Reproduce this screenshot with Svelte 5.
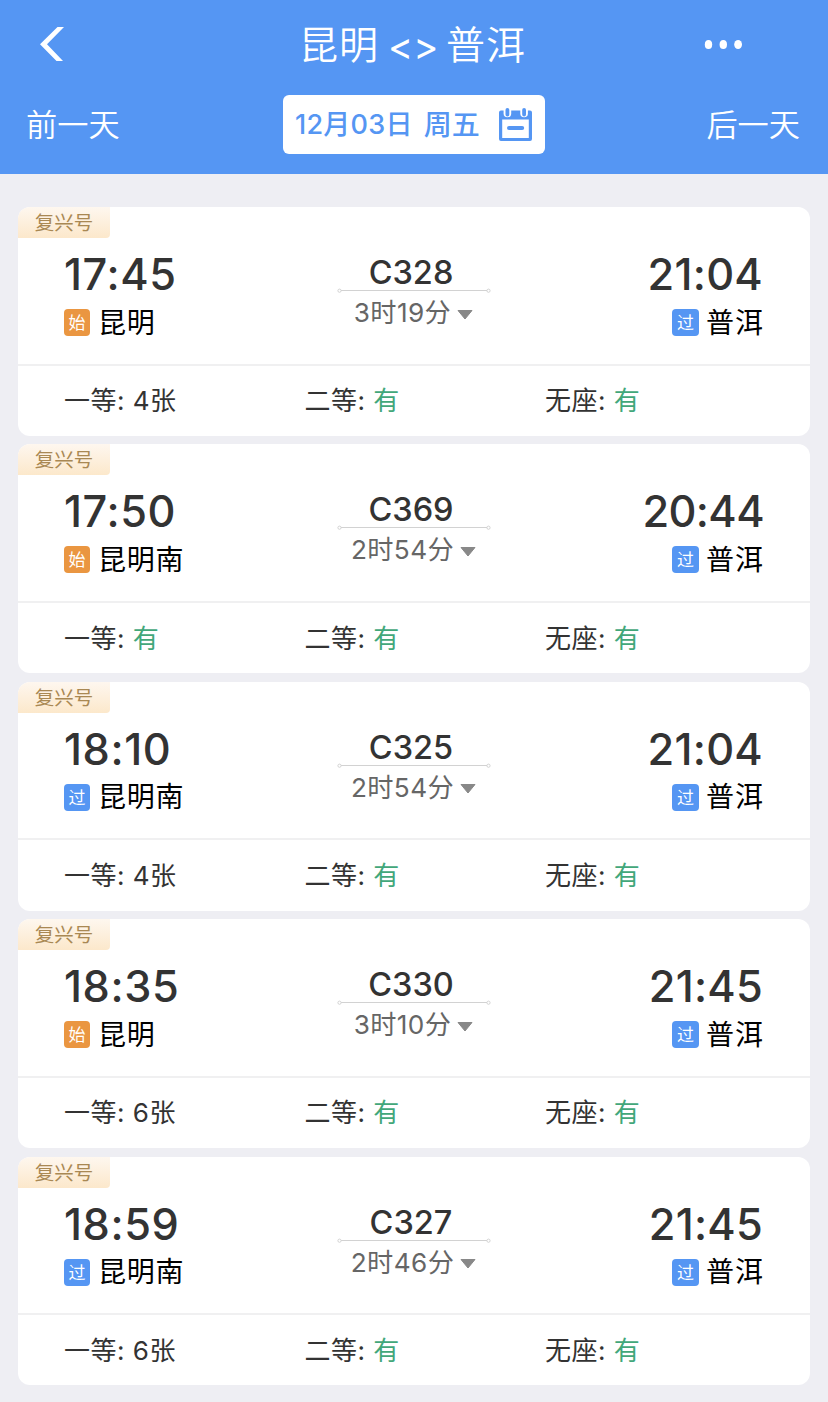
<script>
  const trains = [
    { no: 'C328', dep: '17:45', arr: '21:04', from: '昆明', origin: true, time: '3时19分', first: '4张' },
    { no: 'C369', dep: '17:50', arr: '20:44', from: '昆明南', origin: true, time: '2时54分', first: '有' },
    { no: 'C325', dep: '18:10', arr: '21:04', from: '昆明南', origin: false, time: '2时54分', first: '4张' },
    { no: 'C330', dep: '18:35', arr: '21:45', from: '昆明', origin: true, time: '3时10分', first: '6张' },
    { no: 'C327', dep: '18:59', arr: '21:45', from: '昆明南', origin: false, time: '2时46分', first: '6张' }
  ];
  const seats = (t) => [['一等', t.first], ['二等', '有'], ['无座', '有']];
</script>

<div class="page">
  <header>
    <div class="bar">
      <svg class="back" width="26" height="36" viewBox="0 0 26 36"><path d="M18.5 1H25L8 18.3L24 35H17.5L1 18.3Z" fill="#fff" /></svg>
      <h1><span>昆明</span><span class="swap">&lt;&gt;</span><span>普洱</span></h1>
      <svg class="more" width="40" height="10" viewBox="0 0 40 10" fill="#fff">
        <ellipse cx="5.500" cy="4.500" rx="3.700" ry="4.500" /><ellipse cx="20.300" cy="4.500" rx="3.700" ry="4.500" /><ellipse cx="35.100" cy="4.500" rx="3.900" ry="4.500" />
      </svg>
    </div>
    <div class="days">
      <span>前一天</span>
      <div class="date">
        <span class="day">12月03日</span><span class="week">周五</span>
        <svg width="34" height="34" viewBox="0 0 34 34">
          <path fill-rule="evenodd" d="M2 2.600H31Q33 2.600 33 4.600V31Q33 33 31 33H2Q0 33 0 31V4.600Q0 2.600 2 2.600ZM3.200 11.500V30H29.800V11.500Z" fill="#5596f3" />
          <rect x="4.600" y="-2" width="7.600" height="11.200" rx="3.800" fill="#fff" />
          <rect x="21.300" y="-2" width="7.600" height="11.200" rx="3.800" fill="#fff" />
          <path d="M8.400 2v4.500M25.100 2v4.500" stroke="#5596f3" stroke-width="3.800" stroke-linecap="round" />
          <path d="M10 20h13.200" stroke="#5596f3" stroke-width="4" stroke-linecap="round" />
        </svg>
      </div>
      <span>后一天</span>
    </div>
  </header>

  <main>
    {#each trains as t}
      <article>
        <div class="tag">复兴号</div>
        <div class="trip">
          <div class="end">
            <div class="clock">{t.dep}</div>
            <div class="station"><i class:origin={t.origin}>{t.origin ? '始' : '过'}</i><span>{t.from}</span></div>
          </div>
          <div class="mid">
            <div class="no">{t.no}</div>
            <svg class="line" width="154" height="6" viewBox="0 0 154 6" fill="#fff" stroke="#d2d2d2">
              <path d="M4 2.500H150" /><circle cx="2.500" cy="2.700" r="1.600" /><circle cx="151.500" cy="2.700" r="1.600" />
            </svg>
            <div class="dur">{t.time}<svg width="16" height="10" viewBox="0 0 16 10"><path d="M1 .5H15L8 9Z" fill="#888" stroke="#888" stroke-linejoin="round" /></svg></div>
          </div>
          <div class="end right">
            <div class="clock" class:wide={!t.arr.includes('1')}>{t.arr}</div>
            <div class="station"><i>过</i><span>普洱</span></div>
          </div>
        </div>
        <div class="seats">
          {#each seats(t) as [name, left]}
            <div>{name}: <span class:ok={left === '有'}>{left}</span></div>
          {/each}
        </div>
      </article>
    {/each}
  </main>
</div>

<style>
  :global(body) { background: #eeeef3; }
  .page { width: 828px; height: 1402px; overflow: hidden; background: #eeeef3; font-family: Inter, "Noto Sans CJK SC", sans-serif; color: #333; }
  header { height: 174px; background: #5596f3; color: #fff; box-sizing: border-box; }
  .bar { height: 95px; box-sizing: border-box; padding: 0 85px 6px 39px; display: grid; grid-template-columns: 138px 1fr 184px; align-items: center; }
  .back { position: relative; top: -.5px; }
  .more { justify-self: end; }
  h1 { margin: 0; padding-left: 122px; display: flex; align-items: center; font-size: 39px; line-height: 50px; font-weight: 350; white-space: nowrap; letter-spacing: 1px; }
  .swap { width: 50px; margin: 3px 8px 0 9px; font-size: 38px; font-weight: 400; letter-spacing: 0; line-height: 45px; text-align: center; }
  .days { height: 59px; padding: 0 28px 0 26px; display: grid; grid-template-columns: 257px 262px 1fr; align-items: center; font-size: 31.200px; font-weight: 350; line-height: 58px; }
  .days > span:last-child { text-align: right; }
  .date { height: 59px; box-sizing: border-box; padding: 0 12px; border-radius: 6px; background: #fff; color: #5596f3; display: flex; align-items: center; font-size: 27px; font-weight: 500; white-space: nowrap; }
  .day { letter-spacing: .25px; }
  .week { margin-left: 11px; font-size: 28px; }
  .date svg { margin: 1px 0 0 auto; }
  main { padding: 33px 18px 0; display: flex; flex-direction: column; gap: 8.650px; }
  article { height: 228.750px; background: #fff; border-radius: 12px; overflow: hidden; display: flex; flex-direction: column; }
  .tag { width: 92px; height: 31px; border-radius: 0 0 4px 0; background: linear-gradient(#fef7ef, #fce8cb); color: #a98853; font-size: 19.500px; line-height: 32.500px; text-align: center; }
  .trip { height: 127.500px; box-sizing: border-box; padding: 0 46px; display: grid; grid-template-columns: 1fr 154px 1fr; border-bottom: 2px solid #f0f0f1; }
  .end { display: flex; flex-direction: column; align-items: flex-start; padding-top: 10px; }
  .right { align-items: flex-end; }
  .clock { font-size: 43.300px; font-weight: 470; line-height: 53px; letter-spacing: .6px; }
  .right .clock { letter-spacing: .25px; margin-right: 1px; }
  .right .clock.wide { letter-spacing: -.6px; margin-right: 0; }
  .station { display: flex; align-items: center; height: 43px; font-size: 28px; color: #000; letter-spacing: .7px; line-height: 43px; }
  .station span { padding-top: 1px; }
  .right .station { letter-spacing: 1px; }
  .station i { width: 26px; height: 27px; margin-right: 8px; border-radius: 4px; background: #5596f3; color: #fff; font-style: normal; font-size: 17px; line-height: 28px; text-align: center; letter-spacing: 0; }
  .right .station i { width: 27px; margin-right: 7px; }
  .station i.origin { background: #ea9641; }
  .mid { display: flex; flex-direction: column; align-items: center; padding-top: 19px; }
  .no { font-size: 32.500px; font-weight: 500; line-height: 32px; height: 31px; padding-right: 6px; }
  .line { flex: none; }
  .dur { display: flex; align-items: center; height: 37px; font-size: 26.200px; line-height: 37px; color: #666; font-weight: 400; letter-spacing: .4px; white-space: nowrap; margin-left: -1px; }
  .dur svg { margin: 4px 0 0 6px; }
  .seats { flex: 1; padding: 1px 0 0 46px; display: grid; grid-template-columns: repeat(3, 240.500px); align-items: center; font-size: 26px; line-height: 40px; letter-spacing: .5px; white-space: nowrap; }
  .ok { color: #42a77a; }
</style>
